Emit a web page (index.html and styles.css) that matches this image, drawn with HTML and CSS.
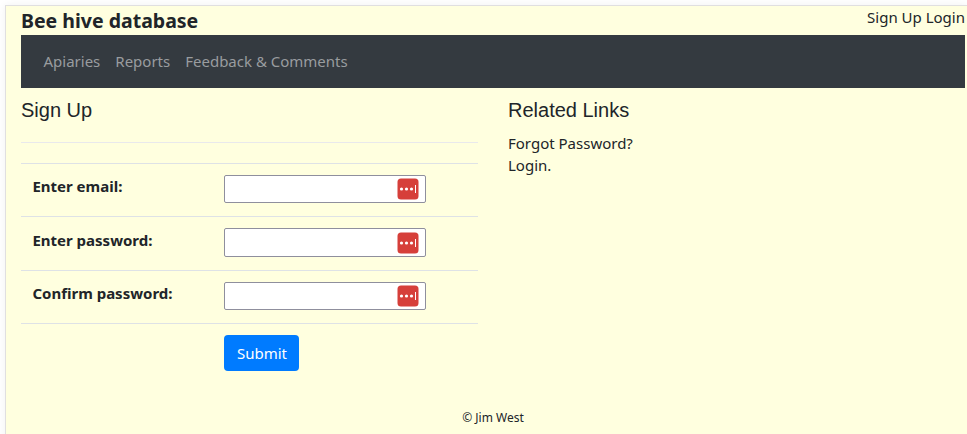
FILE: index.html
```html
<!DOCTYPE html>
<html lang="en">
<head>
<meta charset="utf-8">
<title>Bee hive database</title>
<link rel="stylesheet" href="styles.css">
</head>
<body>
<svg class="symbols" aria-hidden="true">
  <symbol id="key" viewBox="0 0 22 22">
    <rect x=".5" y=".5" width="21" height="21" rx="3.5" fill="#d63f3a"/>
    <g fill="#fff"><circle cx="4.5" cy="11" r="1.6"/><circle cx="9.5" cy="11" r="1.6"/><circle cx="14.5" cy="11" r="1.6"/><rect x="18" y="7" width="1" height="8"/></g>
  </symbol>
</svg>
<div class="page">
  <header class="top">
    <div class="brand">Bee hive database</div>
    <div class="account"><a>Sign Up</a> <a>Login</a></div>
  </header>
  <nav class="nav"><a>Apiaries</a><a>Reports</a><a>Feedback &amp; Comments</a></nav>
  <main class="columns">
    <section>
      <h2>Sign Up</h2>
      <hr>
      <form class="form">
        <div class="row"><label for="email">Enter email:</label><div class="field"><input id="email" type="text"><svg class="key"><use href="#key"/></svg></div></div>
        <div class="row"><label for="pw">Enter password:</label><div class="field"><input id="pw" type="password"><svg class="key"><use href="#key"/></svg></div></div>
        <div class="row"><label for="pw2">Confirm password:</label><div class="field"><input id="pw2" type="password"><svg class="key"><use href="#key"/></svg></div></div>
        <div class="row"><span></span><button type="button">Submit</button></div>
      </form>
    </section>
    <section class="links">
      <h2>Related Links</h2>
      <div><a>Forgot Password?</a></div>
      <div><a>Login.</a></div>
    </section>
  </main>
  <footer>© Jim West</footer>
</div>
</body>
</html>
```
FILE: styles.css
```css
* { box-sizing: border-box; }
html { overflow: hidden; background: #fff; }
body {
  margin: 0;
  padding: 5px 0 0 5px;
  font: 15px/22.5px "Noto Sans", sans-serif;
  color: #212529;
}
.symbols { display: none; }
.page {
  height: 440px;
  padding: 0 2px 0 15px;
  background: #ffffdf;
  border: 1px solid #e0dfe0;
  border-right: 0;
  box-shadow: 0 0 8px rgba(0, 0, 0, .06);
}
.top { display: flex; justify-content: space-between; height: 29px; }
.brand { font-size: 19.5px; line-height: 29.25px; font-weight: 700; }
.account { line-height: 22.5px; }
.nav {
  display: flex;
  align-items: center;
  gap: 15px;
  height: 53px;
  padding-left: 22.5px;
  background: #343a40;
  color: #999c9f;
}
.columns {
  display: grid;
  grid-template-columns: 457px 457px;
  column-gap: 30px;
  padding-top: 10px;
}
h2 { margin: 0 0 10px; font: 400 20px/24px "Liberation Sans", sans-serif; }
.links { line-height: 22px; }
hr { height: 1px; margin: 20px 0; border: 0; background: #e9e9ec; }
.form { margin: 0; }
.row {
  display: grid;
  grid-template-columns: 203px 1fr;
  align-items: start;
  height: 53.4px;
  padding-top: 11px;
  border-top: 1px solid #dee2e6;
}
label { padding: .2px 0 0 11.4px; font-weight: 700; }
.field { position: relative; width: 202px; height: 28.4px; }
input {
  display: block;
  width: 100%;
  height: 100%;
  padding: 1px 28px 1px 2px;
  border: 1px solid #8f8f9d;
  border-radius: 2px;
  background: #fff;
  font: inherit;
}
.key { position: absolute; top: 3.2px; right: 7px; width: 22px; height: 22px; }
button {
  width: 75px;
  height: 36px;
  padding: 0 0 0 1px;
  border: 0;
  border-radius: 4px;
  background: #007bff;
  color: #fff;
  font: inherit;
}
footer { margin-top: 32px; text-align: center; font-size: 12px; line-height: 18px; }
```
